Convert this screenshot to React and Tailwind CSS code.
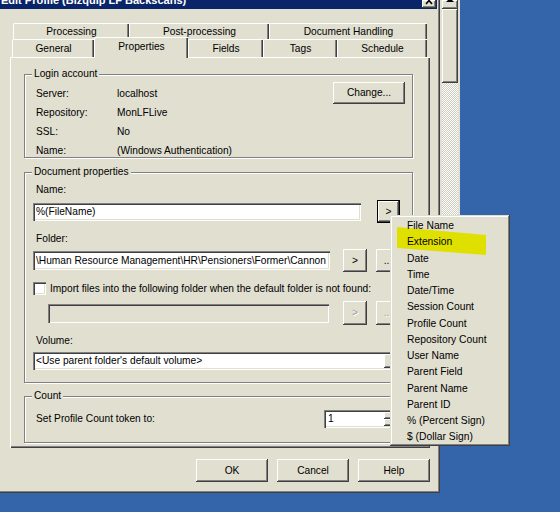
import React from 'react';

const BG = 'bg-[#e0dfd0]';
const raised =
  'shadow-[inset_-1px_-1px_#404040,inset_1px_1px_#ffffff,inset_-2px_-2px_#808080]';
const sunken =
  'shadow-[inset_1px_1px_#808080,inset_2px_2px_#404040,inset_-1px_-1px_#ffffff,inset_-2px_-2px_#e0dfd0]';

const Button = ({ children, className = '', disabled }) => (
  <div
    className={`${BG} ${raised} flex items-center justify-center shrink-0 ${
      disabled ? 'text-[#a0a0a0] [text-shadow:1px_1px_#fff]' : 'text-black'
    } ${className}`}
  >
    {children}
  </div>
);

const Input = ({ children, className = '', disabled }) => (
  <div
    className={`${disabled ? BG : 'bg-white'} ${sunken} flex items-center pl-[3px] overflow-hidden whitespace-nowrap shrink-0 ${className}`}
  >
    {children}
  </div>
);

const Tab = ({ label, w, selected }) => (
  <div
    className={`${BG} border-t border-l border-white rounded-tl-[2px] shadow-[inset_-1px_0_#404040,inset_-2px_0_#808080] flex items-center justify-center shrink-0 ${
      selected ? 'h-[21px] -mb-px relative z-10 pb-[2px]' : 'h-full pt-[1px]'
    }`}
    style={{ width: w }}
  >
    {label}
  </div>
);

const Group = ({ title, className = '', children }) => (
  <fieldset
    className={`border border-[#808080] shadow-[inset_1px_1px_#fff,1px_1px_#fff] ml-[13px] w-[389px] ${className}`}
  >
    <legend className={`ml-[7px] px-[2px] leading-[12px] ${BG}`}>{title}</legend>
    {children}
  </fieldset>
);

const menuItems = [
  'File Name',
  'Extension',
  'Date',
  'Time',
  'Date/Time',
  'Session Count',
  'Profile Count',
  'Repository Count',
  'User Name',
  'Parent Field',
  'Parent Name',
  'Parent ID',
  '% (Percent Sign)',
  '$ (Dollar Sign)',
];

export default function App() {
  return (
    <div className="relative w-[560px] h-[512px] overflow-hidden bg-[#3465aa] flex items-start font-['Liberation_Sans',Arial,sans-serif] text-[10.2px] text-black leading-[12px]">
      {/* dialog */}
      <div
        className={`${BG} w-[440px] h-[493px] shrink-0 flex flex-col shadow-[inset_-1px_-1px_#404040,inset_-2px_-2px_#808080]`}
      >
        {/* title bar, mostly scrolled off */}
        <div className="w-[437px] h-[9px] bg-[#0a246a] flex justify-between overflow-hidden">
          <div className="-mt-[5px] ml-[1px] text-white font-bold text-[11px] leading-[11px] whitespace-nowrap">
            Edit Profile (Bizquip LF Backscans)
          </div>
          <div className={`${BG} ${raised} w-[14px] h-[8px] mr-[1px]`}>
            <svg width="14" height="8" viewBox="0 0 14 8">
              <path d="M4 -3 L10 4 M10 -3 L4 4" stroke="#000" strokeWidth="1.6" />
            </svg>
          </div>
        </div>

        {/* tabs */}
        <div className="pl-[10px] mt-[14px] flex flex-col">
          <div className="ml-[3px] h-[16px] flex">
            <Tab label="Processing" w={116} />
            <Tab label="Post-processing" w={140} />
            <Tab label="Document Handling" w={158} />
          </div>
          <div className="ml-[2px] h-[18px] flex items-end">
            <Tab label="General" w={82} />
            <Tab label="Properties" w={94} selected />
            <Tab label="Fields" w={75} />
            <Tab label="Tags" w={74} />
            <Tab label="Schedule" w={90} />
          </div>

          {/* panel */}
          <div className="w-[420px] h-[391px] border-t border-l border-white shadow-[inset_-1px_-1px_#404040,inset_-2px_-2px_#808080] flex flex-col">
            <Group title="Login account" className="mt-[10px] h-[90px]">
              <div className="flex justify-between pl-[11px] pr-[7px]">
                <div className="flex flex-col pt-[8px]">
                  {[
                    ['Server:', 'localhost'],
                    ['Repository:', 'MonLFLive'],
                    ['SSL:', 'No'],
                    ['Name:', '(Windows Authentication)'],
                  ].map(([k, v]) => (
                    <div key={k} className="flex h-[19px]">
                      <div className="w-[81px]">{k}</div>
                      <div>{v}</div>
                    </div>
                  ))}
                </div>
                <div className="pt-[2px]">
                  <Button className="w-[72px] h-[22px]">Change...</Button>
                </div>
              </div>
            </Group>

            <Group title="Document properties" className="mt-[8px] h-[217px]">
              <div className="flex flex-col pl-[8px]">
                <div className="mt-[6px] ml-[3px]">Name:</div>
                <div className="mt-[4px] h-[23px] flex items-center">
                  <Input className="w-[328px] h-[18px]">%(FileName)</Input>
                  <Button className="ml-[16px] w-[23px] h-[23px] border border-black">
                    &gt;
                  </Button>
                </div>
                <div className="mt-[10px] ml-[3px]">Folder:</div>
                <div className="mt-[4px] h-[23px] flex items-center">
                  <Input className="w-[297px] h-[19px]">
                    \Human Resource Management\HR\Pensioners\Former\Cannon
                  </Input>
                  <Button className="ml-[13px] w-[24px] h-[23px]">&gt;</Button>
                  <Button className="ml-[9px] w-[24px] h-[23px]">...</Button>
                </div>
                <div className="mt-[10px] h-[13px] flex items-center">
                  <div className={`w-[13px] h-[13px] bg-white ${sunken}`} />
                  <div className="ml-[4px] whitespace-nowrap">
                    Import files into the following folder when the default folder is not found:
                  </div>
                </div>
                <div className="mt-[6px] h-[24px] flex items-center">
                  <Input disabled className="ml-[15px] w-[281px] h-[19px]" />
                  <Button disabled className="ml-[14px] w-[24px] h-[24px]">
                    &gt;
                  </Button>
                  <Button disabled className="ml-[9px] w-[24px] h-[24px]">
                    ...
                  </Button>
                </div>
                <div className="mt-[10px] ml-[3px]">Volume:</div>
                <Input className="mt-[5px] w-[367px] h-[18px] justify-between pr-[2px]">
                  <span>&lt;Use parent folder's default volume&gt;</span>
                  <Button className="w-[14px] h-[14px]" />
                </Input>
              </div>
            </Group>

            <Group title="Count" className="mt-[7px] h-[53px]">
              <div className="mt-[8px] h-[18px] flex items-center pl-[11px] pr-[12px]">
                <div>Set Profile Count token to:</div>
                <Input className="ml-auto w-[76px] h-[18px] justify-between pr-[2px]">
                  <span className="ml-[1px]">1</span>
                  <div className="flex flex-col">
                    <Button className="w-[14px] h-[7px]" />
                    <Button className="w-[14px] h-[7px]" />
                  </div>
                </Input>
              </div>
            </Group>
          </div>
        </div>

        {/* dialog buttons */}
        <div className="mt-[11px] pr-[10px] flex justify-end gap-[9px]">
          <Button className="w-[72px] h-[23px]">OK</Button>
          <Button className="w-[72px] h-[23px]">Cancel</Button>
          <Button className="w-[72px] h-[23px]">Help</Button>
        </div>
      </div>

      {/* scrollbar of the window behind */}
      <div className={`${BG} w-[20px] h-[446px] shrink-0 flex flex-col pl-[2px] pr-[2px]`}>
        <div className={`${BG} ${raised} h-[9px] flex justify-center`}>
          <svg width="12" height="9" viewBox="0 0 12 9">
            <path d="M2 2 L10 2 L6 -2 Z" fill="#000" />
          </svg>
        </div>
        <div className={`${BG} ${raised} h-[74px]`} />
        <div className="flex-1 bg-[repeating-conic-gradient(#ffffff_0_25%,#cfcdbd_0_50%)] bg-[length:2px_2px]" />
      </div>

      {/* token menu */}
      <div
        className={`absolute left-[390px] top-[215px] w-[120px] h-[231px] z-20 ${BG} shadow-[inset_-1px_-1px_#404040,inset_1px_1px_#e0dfd0,inset_-2px_-2px_#808080,inset_2px_2px_#ffffff] p-[2px]`}
      >
        <svg className="absolute left-0 top-0" width="120" height="60" viewBox="0 0 120 60">
          <polygon points="7,12 96,20 96,40 57,37 7,33" fill="#e0e000" />
        </svg>
        <div className="relative flex flex-col pt-[1px]">
          {menuItems.map((m) => (
            <div key={m} className="h-[16.25px] flex items-center pl-[15px] text-[10.3px] whitespace-nowrap">
              {m}
            </div>
          ))}
        </div>
      </div>
    </div>
  );
}
